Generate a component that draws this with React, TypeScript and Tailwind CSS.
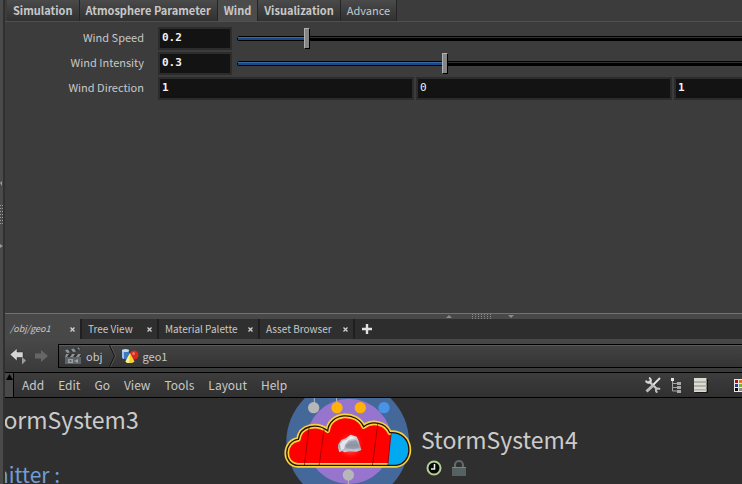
import { useState } from "react";
import type { ReactNode } from "react";

const PARAM_TABS = ["Simulation", "Atmosphere Parameter", "Wind", "Visualization", "Advance"];
const PANE_TABS = [
  { name: "/obj/geo1", width: "w-[75px]" },
  { name: "Tree View", width: "w-[77px]" },
  { name: "Material Palette", width: "w-[101px]" },
  { name: "Asset Browser", width: "w-[95px]" },
];
const MENUS = ["Add", "Edit", "Go", "View", "Tools", "Layout", "Help"];

const FIELD =
  "h-[23px] min-w-0 rounded-none border-2 border-[#2c2c2c] bg-[#131313] px-[2px] pb-[2px] font-['DejaVu_Sans_Mono',monospace] text-[11px] leading-4 text-[#f2f2f2] outline-none";

function ParamRow({ label, id, children }: { label: string; id: string; children: ReactNode }) {
  return (
    <div className="flex h-[25px] items-center">
      <label htmlFor={id} className="w-[139px] shrink-0 pb-[3px] text-right text-[11px] leading-4">
        {label}
      </label>
      <div className="ml-[14px] flex w-[772px] shrink-0 items-center">{children}</div>
    </div>
  );
}

function SliderParam({ label, id, initial, max }: { label: string; id: string; initial: string; max: number }) {
  const [value, setValue] = useState(initial);
  const share = Math.min(1, Math.max(0, Number(value) / max)) * 100;
  return (
    <ParamRow label={label} id={id}>
      <input
        id={id}
        type="text"
        value={value}
        onChange={(e) => setValue(e.target.value)}
        className={`${FIELD} w-[74px] font-bold`}
      />
      <div className="relative ml-[3px] flex h-[23px] flex-1 items-center">
        <div className="absolute inset-x-[2px] top-[9px] h-[5px] overflow-hidden rounded-sm bg-black">
          <div className="mt-px h-px bg-[#333333]" />
          <div
            className="absolute left-px top-px h-[3px] border-t border-[#3a6aa3] bg-[#174a8b]"
            style={{ width: `${share}%` }}
          />
        </div>
        <input
          type="range"
          aria-label={`${label} slider`}
          min={0}
          max={max}
          step={0.01}
          value={Number(value) || 0}
          onChange={(e) => setValue(e.target.value)}
          className="relative h-[23px] w-full appearance-none bg-transparent [&::-webkit-slider-thumb]:h-[21px] [&::-webkit-slider-thumb]:w-[6px] [&::-webkit-slider-thumb]:appearance-none [&::-webkit-slider-thumb]:border [&::-webkit-slider-thumb]:border-black [&::-webkit-slider-thumb]:border-t-[#b0b0b0] [&::-webkit-slider-thumb]:border-l-[#b0b0b0] [&::-webkit-slider-thumb]:bg-[#858585]"
        />
      </div>
    </ParamRow>
  );
}

function Parameters() {
  const [active, setActive] = useState("Wind");
  return (
    <section className="min-h-[313px] flex-1 overflow-hidden bg-[#3c3c3c]">
      <div className="flex h-[22px] border-b border-[#505050] pl-[2px]" role="tablist">
        {PARAM_TABS.map((tab) => (
          <button
            key={tab}
            role="tab"
            aria-selected={tab === active}
            onClick={() => setActive(tab)}
            className={`h-[21px] border-r border-[#252525] px-[6px] pb-[2px] text-[11px] leading-4 ${
              tab === "Advance" ? "font-normal" : "font-bold"
            } ${tab === active ? "bg-[#4b4b4b]" : "bg-linear-to-b from-[#4a4a4a] to-[#313131]"}`}
          >
            {tab}
          </button>
        ))}
      </div>
      <div className="pt-1">
        <SliderParam label="Wind Speed" id="speed" initial="0.2" max={2} />
        <SliderParam label="Wind Intensity" id="intensity" initial="0.3" max={1} />
        <ParamRow label="Wind Direction" id="dir-x">
          <div className="grid flex-1 grid-cols-3 gap-[2px]">
            <input id="dir-x" defaultValue="1" className={`${FIELD} font-bold`} />
            <input aria-label="Wind Direction Y" defaultValue="0" className={FIELD} />
            <input aria-label="Wind Direction Z" defaultValue="1" className={`${FIELD} font-bold`} />
          </div>
        </ParamRow>
      </div>
    </section>
  );
}

function Splitter() {
  return (
    <div className="flex h-[6px] items-center justify-center border-t border-[#727272] bg-[#484848] pr-[8px] pl-[220px]">
      <svg width="70" height="5" viewBox="0 0 70 5" fill="#8b8b8b">
        <path d="M1 4l3-3 3 3z" />
        {[0, 1, 2, 3, 4, 5, 6].map((i) => (
          <path key={i} d={`M${27 + i * 3} 0h1v1h-1zM${27 + i * 3} 2h1v1h-1zM${27 + i * 3} 4h1v1h-1z`} />
        ))}
        <path d="M63 1h6l-3 3z" />
      </svg>
    </div>
  );
}

function PaneTabs() {
  return (
    <div className="flex h-5 bg-[#2d2d2d]">
      {PANE_TABS.map((tab, i) => (
        <div
          key={tab.name}
          className={`flex items-center justify-between pr-1 ${tab.width} ${
            i === 0 ? "bg-[#484848] pl-[5px]" : "border-l-2 border-[#202020] bg-[#2f2f2f] pl-[6px]"
          }`}
        >
          <button className={`whitespace-nowrap leading-4 ${i === 0 ? "text-[9px] italic" : "text-[10px]"}`}>
            {tab.name}
          </button>
          <button aria-label={`Close ${tab.name}`} className="flex size-2 items-center justify-center">
            <svg width="5" height="5" viewBox="0 0 5 5" stroke="#d0d0d0" strokeWidth="1.3">
              <path d="M.5.5l4 4M4.5.5l-4 4" />
            </svg>
          </button>
        </div>
      ))}
      <button aria-label="New tab" className="flex items-center border-l-2 border-[#202020] pl-[7px]">
        <svg width="10" height="10" viewBox="0 0 10 10" stroke="#e2e2e2" strokeWidth="2.4">
          <path d="M5 0v10M0 5h10" />
        </svg>
      </button>
    </div>
  );
}

function PathBar() {
  return (
    <div className="flex h-[33px] items-center bg-linear-to-b from-[#484848] to-[#3a3a3a] pl-[5px]">
      <button aria-label="Back" className="shrink-0">
        <svg width="18" height="18" viewBox="0 0 18 18">
          <path d="M0 7.500L7 1.500V5H13V10.500H7V14z" fill="#d6d6d6" stroke="#2b2b2b" strokeWidth=".5" />
          <path d="M12 10l4 3.500-4 4z" fill="#9c9c9c" />
        </svg>
      </button>
      <button aria-label="Forward" className="ml-[6px] shrink-0">
        <svg width="14" height="14" viewBox="0 0 14 14">
          <path d="M14 7L7 1v3.500H1v5h6V13z" fill="#666666" />
        </svg>
      </button>
      <nav
        aria-label="Network path"
        className="ml-[10px] flex h-6 flex-1 items-center border border-r-0 border-black bg-linear-to-b from-[#444444] to-[#343434] pl-[5px] shadow-[inset_0_1px_0_#5b5b5b]"
      >
        <svg width="18" height="18" viewBox="0 0 18 18">
          <path d="M1 3l15-3 1 3-15 3z" fill="#34393b" />
          <path d="M1 3l3-.5 2 3-3 .5zM7 2l3-.6 2 3-3 .5zM13 1l2-.5 1 3z" fill="#8e9496" />
          <path d="M1 7h16v3H1z" fill="#2d3133" />
          <path d="M2 7h3L3 10H1zM8 7h3l-2 3H6zM14 7h3l-2 3h-3z" fill="#8e9496" />
          <path d="M1 10h16v7H1z" fill="#5d6467" />
          <path d="M4 12h5v4H4zM10 14l4-2v4z" fill="#9aa1a4" />
          <circle cx="6.500" cy="14" r="1" fill="#53595c" />
        </svg>
        <a href="#obj" className="ml-1 text-[11px] leading-4">obj</a>
        <svg width="7" height="22" viewBox="0 0 7 22" fill="none" className="ml-[6px]">
          <path d="M.5 0l5 11-5 11" stroke="#101010" />
          <path d="M1.500 0l5 11-5 11" stroke="#606060" strokeWidth=".7" />
        </svg>
        <svg width="18" height="16" viewBox="0 0 18 16" className="ml-[5px]">
          <path d="M1 2v7c0 3 7 3 7 0V2z" fill="#3c79be" />
          <path d="M1 2v7c0 1 1 2 2 2V2z" fill="#9fc2e8" />
          <ellipse cx="4.500" cy="2.500" rx="3.500" ry="1.500" fill="#c4daf1" />
          <circle cx="13" cy="7" r="4.500" fill="#d62a20" />
          <circle cx="12.500" cy="5.500" r="1.500" fill="#f4705f" />
          <path d="M9 5l4.500 8.500c-2 2-7 2-9 0z" fill="#f1d433" />
          <path d="M9 5l-1 10c-1 0-3-.5-3.500-1.500z" fill="#fff38b" />
        </svg>
        <a href="#geo1" className="ml-1 text-[11px] leading-4">geo1</a>
      </nav>
    </div>
  );
}

function MenuBar() {
  return (
    <div className="flex h-[26px] items-center border-y border-black bg-linear-to-b from-[#3d3d3d] to-[#303030]">
      <button aria-label="Collapse menu" className="flex h-full w-[9px] justify-center border-r border-black bg-[#494949] pt-px">
        <svg width="7" height="7" viewBox="0 0 7 7">
          <path d="M3.500 0L7 6H0z" fill="#000" />
        </svg>
      </button>
      <nav className="ml-2 flex gap-[14px] text-[12px] leading-5">
        {MENUS.map((m) => (
          <button key={m}>{m}</button>
        ))}
      </nav>
      <div className="ml-auto flex shrink-0 items-center">
        <button aria-label="Tools">
          <svg width="16" height="16" viewBox="0 0 16 16" fill="none">
            <path d="M3.500 4l9 8.500" stroke="#c6c6c6" strokeWidth="2.400" />
            <path d="M1 3.500a2.600 2.600 0 0 0 4.300 1.600A2.800 2.800 0 0 0 4 .8" stroke="#dadada" strokeWidth="2" />
            <path d="M15 12.500a2.500 2.500 0 0 0-4 0 2.500 2.500 0 0 0 1.500 3" stroke="#bdbdbd" strokeWidth="1.900" />
            <path d="M15 1L8 8" stroke="#e6e6e6" strokeWidth="1.800" />
            <path d="M8.500 8l-7 6.500" stroke="#bcbcbc" strokeWidth="3" />
          </svg>
        </button>
        <button aria-label="Tree" className="ml-[9px]">
          <svg width="12" height="16" viewBox="0 0 12 16">
            <path d="M2.500 3v11H8M2.500 6.500H8M2.500 10.500H8" fill="none" stroke="#a3a3a3" />
            <path d="M1 1h3v3H1z" fill="#e8e8e8" />
            <path d="M7 5h4v3H7zM7 9h4v3H7zM7 13h4v3H7z" fill="#a9a9a9" />
          </svg>
        </button>
        <button aria-label="List" className="ml-[12px]">
          <svg width="14" height="15" viewBox="0 0 14 15">
            <path d="M1 1h13v14H1z" fill="#151515" />
            <path d="M0 0h12.500v14H0z" fill="#dcdcd4" />
            <path d="M0 3h12.500v2H0zM0 7h12.500v2H0zM0 11h12.500v1.500H0z" fill="#b2b2aa" />
          </svg>
        </button>
        <button aria-label="Color palette" className="ml-[26px] w-2 overflow-hidden">
          <svg width="14" height="13" viewBox="0 0 14 13" className="max-w-none">
            <path d="M0 0h14v13H0z" fill="#e9e9e9" />
            <path d="M1 1h3v3H1z" fill="#a51616" />
            <path d="M5 1h4v3H5z" fill="#e2741c" />
            <path d="M1 5h3v3H1z" fill="#1f3f92" />
            <path d="M5 5h4v3H5z" fill="#78b52c" />
            <path d="M1 9h3v3H1z" fill="#080808" />
            <path d="M5 9h4v3H5z" fill="#8b8b8b" />
            <path d="M10 1h3v11h-3z" fill="#d6b82a" />
          </svg>
        </button>
      </div>
    </div>
  );
}

const CLOUD =
  "M68 220C24 218 24 148 70 142C76 100 126 92 158 116C164 62 244 56 266 104C292 84 332 92 344 122C416 116 418 214 364 220Z";

function StormNode() {
  return (
    <svg width="150" height="92" viewBox="0 0 450 276" className="absolute -top-[6px] left-[270px]">
      <defs>
        <clipPath id="cloud-shape">
          <path d={CLOUD} />
        </clipPath>
        <radialGradient id="glow">
          <stop offset="0" stopColor="#fff" stopOpacity=".7" />
          <stop offset="1" stopColor="#f33" stopOpacity="0" />
        </radialGradient>
        <linearGradient id="rock" x1="0" y1="0" x2="0" y2="1">
          <stop offset="0" stopColor="#e6e8ee" />
          <stop offset=".6" stopColor="#9a9eac" />
          <stop offset="1" stopColor="#d2d4da" />
        </linearGradient>
      </defs>
      <circle cx="218" cy="150" r="184" fill="#45689b" />
      <circle cx="222" cy="148" r="128" fill="#9775cf" />
      <path d="M118 0v35M182 0l4 35M220 255v21" stroke="#b7b7b7" strokeWidth="3" />
      <circle cx="116" cy="47" r="17" fill="#b7b7b7" />
      <circle cx="186" cy="47" r="17" fill="#ffb20a" />
      <circle cx="256" cy="47" r="17" fill="#ffb20a" />
      <circle cx="327" cy="47" r="17" fill="#4a94e8" />
      <path d={CLOUD} fill="#f00" stroke="#f6d33a" strokeWidth="14" strokeLinejoin="round" />
      <g clipPath="url(#cloud-shape)">
        <path d="M352 90h80v140h-94z" fill="#00a9f0" />
        <path d="M104 90L88 222M149 100L132 222M310 84L292 222M352 90L338 222" stroke="#700" strokeWidth="2" />
      </g>
      <path d={CLOUD} fill="none" stroke="#2a0c08" strokeWidth="4" />
      <circle cx="226" cy="160" r="40" fill="url(#glow)" />
      <path d="M189 158l10-14 14-5 14-11 18 6 6 12 8 28-14 5-22-1-14 3-8-4-8 4-4-14z" fill="url(#rock)" />
      <path d="M194 157l10-11 12-3 11-10 14 6-20 5-10 14-4 12-8 4z" fill="#f2f3f7" fillOpacity=".8" />
      <path d="M214 160l12-12 18-4 10 24-20 3-20-2z" fill="#868b9b" fillOpacity=".6" />
      <circle cx="220" cy="249" r="17" fill="#b7b7b7" />
    </svg>
  );
}

function NetworkView() {
  return (
    <section className="relative h-[86px] overflow-hidden bg-[#2f2f2f] text-[23px] leading-8 whitespace-nowrap text-[#cbcbcb]">
      <p className="absolute top-[5px] -left-[23px]">StormSystem3</p>
      <p className="absolute top-[60px] -left-[28px] text-[21px] text-[#6f9ed8]">Emitter :</p>
      <StormNode />
      <p className="absolute top-[25px] left-[416px]">StormSystem4</p>
      <svg width="42" height="18" viewBox="0 0 42 18" className="absolute top-[61px] left-[421px]">
        <circle cx="8" cy="9" r="6.500" fill="#070907" stroke="#b5cf94" strokeWidth="2" />
        <path d="M8.500 5v5H5" fill="none" stroke="#f0f5e9" strokeWidth="1.500" />
        <path d="M29 9V6a4 4 0 0 1 8 0v3" fill="none" stroke="#606a6a" strokeWidth="2.200" />
        <path d="M26 8h14v9H26z" fill="#566161" />
        <path d="M26 8h14v1H26z" fill="#7c8585" />
      </svg>
    </section>
  );
}

export default function App() {
  return (
    <div className="flex min-h-screen overflow-hidden bg-[#3c3c3c] font-['Noto_Sans_CJK_SC','Open_Sans',sans-serif] text-[#c8c8c8]">
      <div className="flex w-[5px] shrink-0 flex-col border-r-2 border-[#303030] bg-[#4a4a4a] pt-[181px]">
        <svg width="3" height="68" viewBox="0 0 3 68" fill="#999999">
          <path d="M0 2l2-2v5zM0 63l3 2-3 2z" />
          {[0, 1, 2, 3, 4, 5, 6].map((i) => (
            <path key={i} d={`M0 ${24 + i * 3}h1v1H0zM2 ${24 + i * 3}h1v1H2z`} />
          ))}
        </svg>
      </div>
      <main className="flex min-w-0 flex-1 flex-col">
        <Parameters />
        <Splitter />
        <PaneTabs />
        <PathBar />
        <MenuBar />
        <NetworkView />
      </main>
    </div>
  );
}
